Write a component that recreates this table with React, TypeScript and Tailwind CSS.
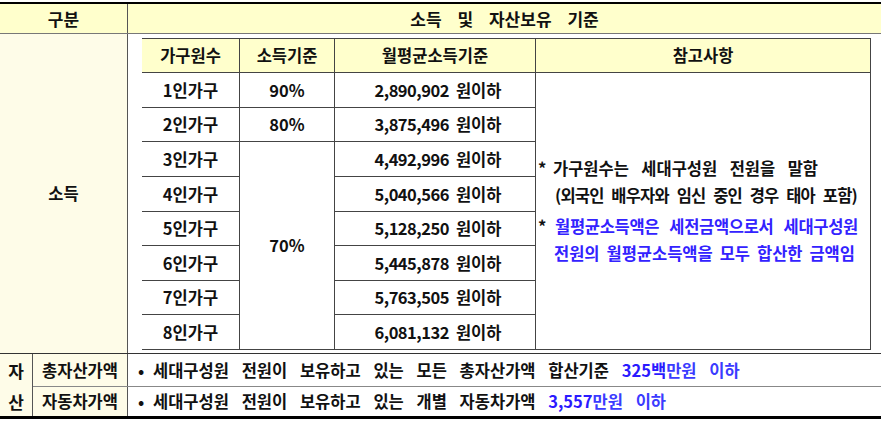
import React from "react";

const rows = [
  { n: "1인가구", p: "90%", v: "2,890,902" },
  { n: "2인가구", p: "80%", v: "3,875,496" },
  { n: "3인가구", p: "70%", v: "4,492,996" },
  { n: "4인가구", p: null, v: "5,040,566" },
  { n: "5인가구", p: null, v: "5,128,250" },
  { n: "6인가구", p: null, v: "5,445,878" },
  { n: "7인가구", p: null, v: "5,763,505" },
  { n: "8인가구", p: null, v: "6,081,132" },
];

function Line({ words, w, cls = "" }: { words: string[]; w: string; cls?: string }) {
  return (
    <div className={`flex justify-between ${w} ${cls}`}>
      {words.map((x, i) => (
        <span key={i}>{x}</span>
      ))}
    </div>
  );
}

export default function App() {
  return (
    <div className="w-[884px] h-[422px] bg-white pt-[2px] font-['Noto_Sans_CJK_KR',sans-serif] font-bold text-[#111]">
      <div className="w-[881px] border-t-2 border-b-[3px] border-black">
        {/* header */}
        <div className="flex h-[30px] bg-[#ffffcc] border-b border-[#777]">
          <div className="w-[128px] border-r border-[#555] flex items-center justify-center text-[17px]">구분</div>
          <div className="flex-1 flex items-center justify-center text-[17px] [word-spacing:12px]">
            소득 및 자산보유 기준
          </div>
        </div>
        {/* income */}
        <div className="flex h-[320px] border-b border-[#333]">
          <div className="w-[128px] bg-[#fefce8] border-r border-[#555] flex items-center justify-center text-[16.5px]">
            소득
          </div>
          <div className="flex-1 pt-[4px] pl-[14px] pr-[10px]">
            <div className="grid grid-cols-[98px_95px_201px_335px] grid-rows-[34px_35px_34px_35px_35px_34px_35px_34px_35px] border-t border-[#444] text-[16.5px]">
              <div className="bg-[#ffffcc] border-b border-r border-[#444] flex items-center justify-center">가구원수</div>
              <div className="bg-[#ffffcc] border-b border-r border-[#444] flex items-center justify-center">소득기준</div>
              <div className="bg-[#ffffcc] border-b border-r border-[#444] flex items-center justify-center">월평균소득기준</div>
              <div className="bg-[#ffffcc] border-b border-r border-[#444] flex items-center justify-center">참고사항</div>
              {rows.map((r, i) => (
                <React.Fragment key={i}>
                  <div className="border-b border-r border-[#444] flex items-center justify-center">{r.n}</div>
                  {i < 2 && (
                    <div className="border-b border-r border-[#444] flex items-center justify-center">{r.p}</div>
                  )}
                  {i === 2 && (
                    <div className="row-span-6 border-b border-r border-[#444] flex items-center justify-center">{r.p}</div>
                  )}
                  <div className="col-start-3 border-b border-r border-[#444] flex items-center justify-center pl-[6px]">
                    <span className="tracking-[-0.5px]">{r.v}</span>
                    <span className="ml-[7px]">원이하</span>
                  </div>
                  {i === 0 && (
                    <div className="row-span-8 border-b border-r border-[#444] flex flex-col justify-center pl-[2px] leading-[27px]">
                      <div className="flex">
                        <span className="w-[15px]">*</span>
                        <div>
                          <Line words={["가구원수는", "세대구성원", "전원을", "말함"]} w="w-[265px]" />
                          <Line
                            words={["(외국인", "배우자와", "임신", "중인", "경우", "태아", "포함)"]}
                            w="w-[302px]"
                            cls="ml-[2px] tracking-[-0.8px]"
                          />
                        </div>
                      </div>
                      <div className="flex mt-[4px]">
                        <span className="w-[15px]">*</span>
                        <div className="text-[#3322ff]">
                          <Line words={["월평균소득액은", "세전금액으로서", "세대구성원"]} w="w-[303px]" cls="ml-[2px] tracking-[-0.3px]" />
                          <Line words={["전원의", "월평균소득액을", "모두", "합산한", "금액임"]} w="w-[301px]" cls="ml-[1px]" />
                        </div>
                      </div>
                    </div>
                  )}
                </React.Fragment>
              ))}
            </div>
          </div>
        </div>
        {/* assets */}
        <div className="flex h-[62px] text-[16.5px]">
          <div className="w-[33px] bg-[#fefce8] border-r border-[#555] flex flex-col">
            <div className="h-[33px] flex items-center justify-center text-[17px]">자</div>
            <div className="h-[29px] flex items-center justify-center text-[17px]">산</div>
          </div>
          <div className="flex-1 flex flex-col">
            <div className="h-[33px] flex border-b border-[#888]">
              <div className="w-[95px] bg-[#fefce8] border-r border-[#555] flex items-center justify-center">
                총자산가액
              </div>
              <div className="flex-1 flex items-center pl-[10px] [word-spacing:9px]">
                <span className="w-[15px]">•</span>
                <span>
                  세대구성원 전원이 보유하고 있는 모든 총자산가액 합산기준{" "}
                  <span className="text-[#2a1aff]">325백</span>
                  <span className="text-[#3b3bff]">만원 이하</span>
                </span>
              </div>
            </div>
            <div className="h-[29px] flex">
              <div className="w-[95px] bg-[#fefce8] border-r border-[#555] flex items-center justify-center">
                자동차가액
              </div>
              <div className="flex-1 flex items-center pl-[10px] [word-spacing:9px]">
                <span className="w-[15px]">•</span>
                <span>
                  세대구성원 전원이 보유하고 있는 개별 자동차가액{" "}
                  <span className="text-[#2a1aff]">3,557</span>
                  <span className="text-[#3b3bff]">만원 이하</span>
                </span>
              </div>
            </div>
          </div>
        </div>
      </div>
    </div>
  );
}
